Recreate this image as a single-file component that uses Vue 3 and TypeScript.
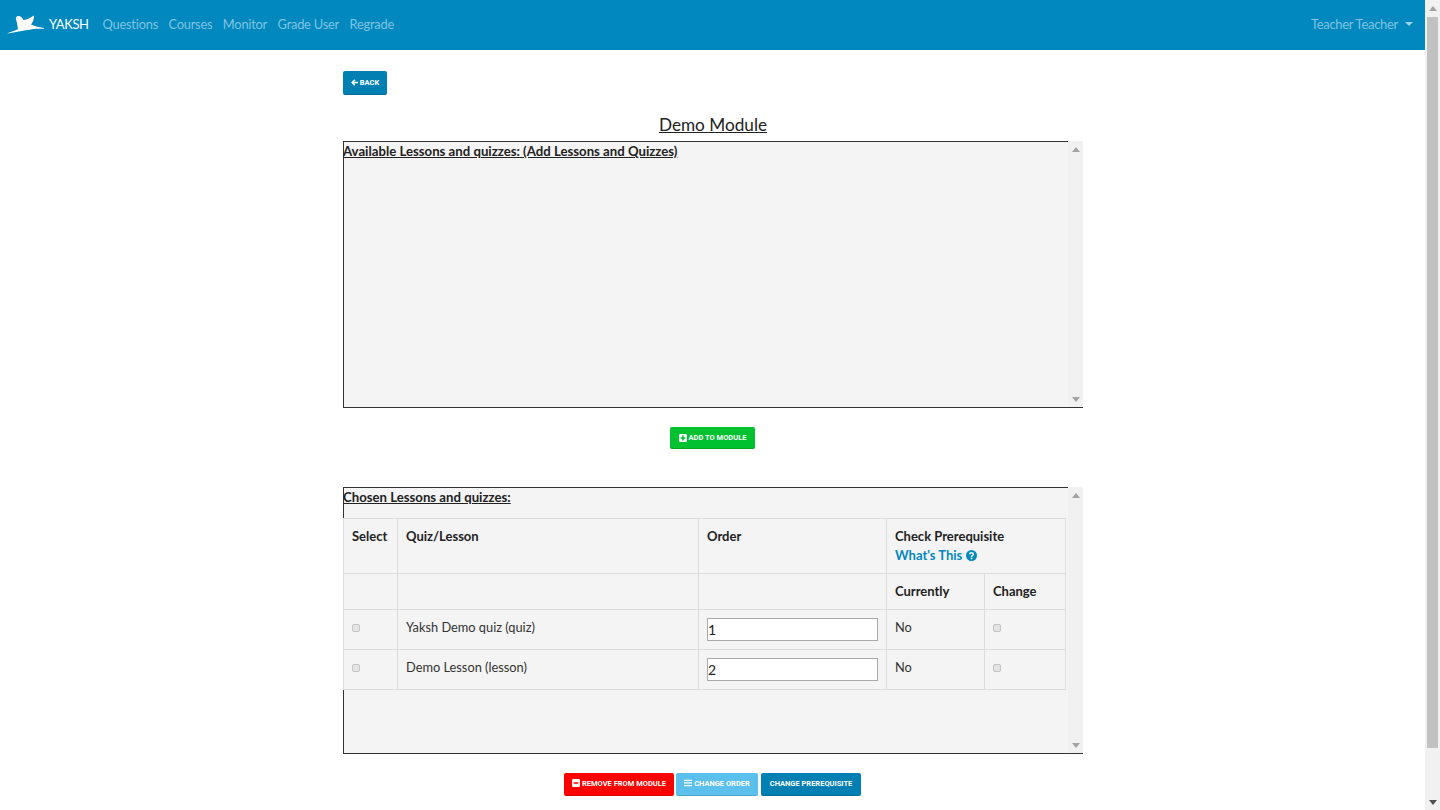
<script setup lang="ts">
const links: string[] = ['Questions', 'Courses', 'Monitor', 'Grade User', 'Regrade']
const rows = [
  { name: 'Yaksh Demo quiz (quiz)', order: '1', current: 'No' },
  { name: 'Demo Lesson (lesson)', order: '2', current: 'No' }
]
</script>

<template>
  <div class="window">
    <div class="page">
      <nav class="navbar">
        <a class="brand">
          <svg class="bird" viewBox="6 15 40 20" width="40" height="20" aria-hidden="true">
            <path fill="#fff" d="M7 33.5C11 31.5 15 31 18 29C17.5 26 17 23 16.5 21C15.5 19 15.5 17 17.5 16C20 15.5 22 17 23.5 20C26 20 30 18 34 15.5C34 19 33 22 31 24.5C34 26 38 27 44 28L44 28.800C38 28.500 33 28.800 28 30C22 30.500 13 33 7 33.500Z"/>
          </svg>
          <span>YAKSH</span>
        </a>
        <a v-for="link in links" :key="link" class="nav-link">{{ link }}</a>
        <a class="user">Teacher Teacher<i class="caret"></i></a>
      </nav>

      <main class="container">
        <div class="back-row">
          <button class="btn blue back">
            <svg viewBox="0 0 10 10" width="7" height="7"><path fill="none" stroke="#fff" stroke-width="2.2" d="M5.500 1.200L1.700 5l3.800 3.800M2 5h8"/></svg>
            BACK
          </button>
        </div>
        <h2 class="title">Demo Module</h2>

        <section class="panel">
          <div class="panel-body">
            <h3 class="panel-title">Available Lessons and quizzes: (Add Lessons and Quizzes)</h3>
          </div>
          <div class="scroll"><i class="up"></i><i class="down"></i></div>
        </section>

        <div class="actions add">
          <button class="btn green">
            <svg viewBox="0 0 10 10" width="8" height="8"><path fill="#fff" fill-rule="evenodd" d="M1.500 0h7A1.500 1.500 0 0 1 10 1.500v7A1.500 1.500 0 0 1 8.500 10h-7A1.500 1.500 0 0 1 0 8.500v-7A1.500 1.500 0 0 1 1.500 0ZM4 2v2H2v2h2v2h2V6h2V4H6V2Z"/></svg>
            ADD TO MODULE
          </button>
        </div>

        <section class="panel chosen">
          <div class="panel-body">
            <h3 class="panel-title">Chosen Lessons and quizzes:</h3>
            <table class="grid">
              <colgroup>
                <col class="c1" />
                <col class="c2" />
                <col class="c3" />
                <col class="c4" />
                <col class="c5" />
              </colgroup>
              <thead>
                <tr class="head-one">
                  <th>Select</th>
                  <th>Quiz/Lesson</th>
                  <th>Order</th>
                  <th colspan="2">
                    Check Prerequisite<br />
                    <a class="help">What's This
                      <svg viewBox="0 0 12 12" width="11" height="11"><circle cx="6" cy="6" r="6" fill="#0088bf"/><path fill="none" stroke="#fff" stroke-width="1.600" d="M4 4.600C4 3.400 5 3 6 3s2 .6 2 1.700C8 6 6 6 6 7.500"/><rect x="5.100" y="8.300" width="1.800" height="1.700" fill="#fff"/></svg>
                    </a>
                  </th>
                </tr>
                <tr class="head-two">
                  <th></th>
                  <th></th>
                  <th></th>
                  <th>Currently</th>
                  <th>Change</th>
                </tr>
              </thead>
              <tbody>
                <tr v-for="row in rows" :key="row.order">
                  <td><input class="check" type="checkbox" /></td>
                  <td>{{ row.name }}</td>
                  <td class="order-cell"><input class="order" type="text" :value="row.order" /></td>
                  <td>{{ row.current }}</td>
                  <td><input class="check" type="checkbox" /></td>
                </tr>
              </tbody>
            </table>
          </div>
          <div class="scroll"><i class="up"></i><i class="down"></i></div>
        </section>

        <div class="actions bottom">
          <button class="btn red">
            <svg viewBox="0 0 10 10" width="8" height="8"><path fill="#fff" fill-rule="evenodd" d="M1.500 0h7A1.500 1.500 0 0 1 10 1.500v7A1.500 1.500 0 0 1 8.500 10h-7A1.500 1.500 0 0 1 0 8.500v-7A1.500 1.500 0 0 1 1.500 0ZM2 4v2h6V4Z"/></svg>
            REMOVE FROM MODULE
          </button>
          <button class="btn sky">
            <svg viewBox="0 0 10 10" width="8" height="8"><path fill="#fff" d="M0 1h10v1.500H0ZM0 4.200h10v1.500H0ZM0 7.500h10V9H0Z"/></svg>
            CHANGE ORDER
          </button>
          <button class="btn blue">CHANGE PREREQUISITE</button>
        </div>
      </main>
    </div>
    <div class="page-scroll">
      <i class="up dark"></i>
      <div class="thumb"></div>
      <i class="down dark"></i>
    </div>
  </div>
</template>

<style>
html, body { margin: 0; overflow: hidden; }
</style>

<style scoped>
.window {
  display: flex;
  width: 1440px;
  height: 810px;
  overflow: hidden;
  font-family: "Lato", "Open Sans", sans-serif;
  font-size: 14px;
  color: #333;
  background: #fff;
}
.page { flex: 0 0 1425px; width: 1425px; }
.navbar {
  display: flex;
  align-items: center;
  height: 50px;
  background: #0088bf;
  padding: 0 12px 2px 6px;
  box-sizing: border-box;
}
.brand { display: flex; align-items: center; gap: 3px; color: #fff; margin-right: 14px; letter-spacing: -.4px; font-size: 13px; }
.bird { margin-top: 2px; }
.nav-link { color: #80c4df; margin-right: 10.500px; font-size: 12.800px; letter-spacing: -.2px; white-space: nowrap; }
.user { margin-left: auto; color: #80c4df; font-size: 13px; letter-spacing: -.3px; display: flex; align-items: center; }
.caret { display: block; margin-left: 7px; border: 4px solid transparent; border-top-color: #9fd3e8; border-bottom: 0; }

.container { width: 740px; margin-left: 343px; }
.back-row { padding-top: 21px; height: 24px; }
.btn {
  display: inline-flex;
  align-items: center;
  justify-content: center;
  gap: 2px;
  box-sizing: border-box;
  height: 23px;
  padding: 0 8px;
  border: 0;
  border-bottom: 1px solid rgba(0, 0, 0, .15);
  border-radius: 2px;
  color: #fff;
  font-family: "Roboto", sans-serif;
  font-size: 7.500px;
  font-weight: 700;
  white-space: nowrap;
}
.back { width: 44px; height: 24px; padding: 0; }
.blue { background: #007fb2; }
.green { background: #00c12f; width: 85px; height: 22px; margin-left: -1px; }
.red { background: #f00; width: 110px; }
.sky { background: #5bc0eb; width: 82px; margin-right: 1px; }
.bottom .btn { padding-bottom: 2px; }
.bottom .blue { width: 100px; }

.title {
  margin: 17px 0 0;
  height: 29px;
  font-size: 17.200px;
  font-weight: 400;
  line-height: 26px;
  text-align: center;
  text-decoration: underline;
  color: #222;
}
.panel { display: flex; height: 267px; }
.panel-body {
  flex: 0 0 725px;
  box-sizing: border-box;
  border-left: 1px solid #333;
  border-top: 1px solid #333;
  border-bottom: 1px solid #333;
  background: #f4f4f4;
  position: relative;
}
.panel-title {
  margin: 0 0 0 -1px;
  height: 30px;
  font-size: 13.200px;
  line-height: 18px;
  font-weight: 700;
  text-decoration: underline;
  color: #222;
  white-space: nowrap;
}
.scroll {
  flex: 0 0 15px;
  box-sizing: border-box;
  position: relative;
  background: #f1f1f1;
  border-bottom: 1px solid #333;
}
.up, .down {
  position: absolute;
  left: 3.500px;
  display: block;
  width: 0;
  height: 0;
  border-left: 4px solid transparent;
  border-right: 4px solid transparent;
}
.up { top: 6px; border-bottom: 5px solid #a3a3a3; }
.down { bottom: 5px; border-top: 5px solid #a3a3a3; }
.actions { display: flex; justify-content: center; }
.add { height: 79px; padding-top: 19px; box-sizing: border-box; }
.bottom { gap: 2px; padding-top: 19px; padding-right: 1px; }

.grid {
  position: relative;
  margin-left: -1px;
  width: 722px;
  table-layout: fixed;
  border-collapse: collapse;
  font-size: 12.800px;
  color: #333;
}
.grid th, .grid td {
  border: 1px solid #ddd;
  padding: 8px;
  text-align: left;
  vertical-align: top;
  line-height: 19px;
  box-sizing: border-box;
}
.grid th { font-weight: 700; color: #222; font-size: 13px; }
.head-one { height: 55px; }
.head-two { height: 36px; }
.grid tbody tr { height: 40px; }
.c1 { width: 54px; }
.c2 { width: 301px; }
.c3 { width: 188px; }
.c4 { width: 98px; }
.c5 { width: 81px; }
.grid .order-cell { padding-top: 8px; padding-bottom: 0; }
.help { display: block; color: #0088bf; }
.help svg { vertical-align: -1px; }
.check {
  appearance: none;
  display: block;
  box-sizing: border-box;
  width: 8px;
  height: 8px;
  margin: 6px 0 0;
  border: 1px solid #c4c4c4;
  border-radius: 2px;
  background: #e4e4e4;
}
.order {
  display: block;
  box-sizing: border-box;
  width: 171px;
  height: 23px;
  padding: 0;
  border: 1px solid #a9a9a9;
  background: #fff;
  font-family: "Lato", sans-serif;
  font-size: 14px;
  color: #222;
}
.page-scroll {
  flex: 0 0 15px;
  position: relative;
  background: #f1f1f1;
}
.thumb {
  position: absolute;
  top: 17px;
  left: 2px;
  width: 11px;
  height: 731px;
  background: #c1c1c1;
}
.dark.down { border-top-color: #505050; }
</style>
